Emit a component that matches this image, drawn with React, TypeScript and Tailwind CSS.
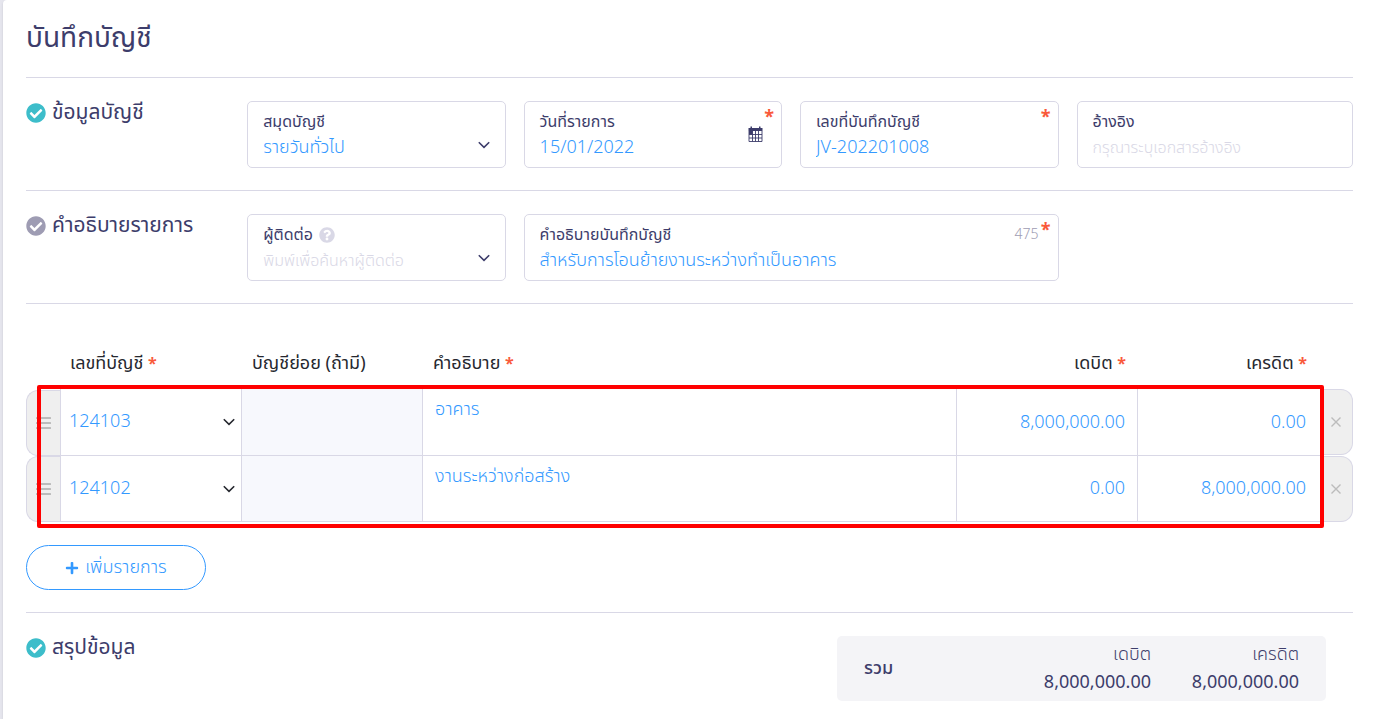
import type { ReactNode } from "react";
import { FaCheckCircle, FaPlus, FaQuestionCircle } from "react-icons/fa";

const rows = [
  { id: "row-1", account: "124103", desc: "อาคาร", debit: "8,000,000.00", credit: "0.00" },
  { id: "row-2", account: "124102", desc: "งานระหว่างก่อสร้าง", debit: "0.00", credit: "8,000,000.00" },
];

function Chevron({ className }: { className: string }) {
  return (
    <svg
      viewBox="0 0 12 8"
      fill="none"
      stroke="currentColor"
      strokeWidth="1.6"
      className={`pointer-events-none absolute h-2 w-3 ${className}`}
    >
      <path d="M0.8 1.2 L6 6.4 L11.2 1.2" />
    </svg>
  );
}

function CalendarIcon() {
  return (
    <svg viewBox="0 0 15 16" className="h-4 w-[15px]" fill="#3d3d6b">
      <path d="M2.5 0.5h1.5v2h-1.5z M11 0.5h1.5v2h-1.5z M0.5 2h14v3h-14z" />
      <path
        d="M1 5v10.5h13V5 M4.5 5v10.5 M7.5 5v10.5 M10.5 5v10.5 M1 8.5h13 M1 12h13"
        fill="none"
        stroke="#3d3d6b"
        strokeWidth="0.9"
      />
      <path d="M1 5h3.5v3.5h-3.5z" />
    </svg>
  );
}

function Star() {
  return <span className="text-base leading-4 font-bold text-[#f9593a]">*</span>;
}

function SectionTitle({ title, done }: { title: string; done: boolean }) {
  return (
    <h2 className="flex h-6 w-1/6 items-center gap-1.5 text-[21px] whitespace-nowrap">
      <FaCheckCircle className={done ? "size-5 shrink-0 text-[#3dbdca]" : "size-5 shrink-0 text-[#9e9cb3]"} />
      {title}
    </h2>
  );
}

function Section({ title, done, children }: { title: string; done: boolean; children: ReactNode }) {
  return (
    <section className="flex border-b border-[#d9d8e6] pt-[23px] pb-[22px]">
      <SectionTitle title={title} done={done} />
      <div className="grid w-5/6 grid-cols-4">{children}</div>
    </section>
  );
}

type FieldProps = {
  id: string;
  label: string;
  className?: string;
  required?: boolean;
  help?: boolean;
  children: ReactNode;
};

function Field({ id, label, className = "pr-[18px]", required, help, children }: FieldProps) {
  return (
    <div className={className}>
      <div className="relative h-[67px] rounded-[5px] border border-[#d9d8e6] px-[15px] pt-2">
        <label htmlFor={id} className="flex h-6 items-center gap-1.5 text-base">
          {label}
          {help && <FaQuestionCircle className="size-4 text-[#d9d8e6]" />}
        </label>
        {children}
        {required && (
          <span className="absolute top-1 right-[7px] text-lg leading-6 font-bold text-[#f9593a]">*</span>
        )}
      </div>
    </div>
  );
}

export default function App() {
  return (
    <div className="min-h-screen bg-[#e6e6ee] pl-[3px] font-['Noto_Sans_Thai','Noto_Sans',sans-serif] text-[#3d3d6b]">
      <main className="min-h-screen rounded-tl-[4px] bg-white pr-5 pl-[23px] shadow">
        <header className="flex h-[78px] items-center border-b border-[#d9d8e6]">
          <h1 className="text-[28px] leading-9">บันทึกบัญชี</h1>
        </header>

        <Section title="ข้อมูลบัญชี" done>
          <Field id="book" label="สมุดบัญชี">
            <select id="book" className="block h-7 w-full appearance-none text-lg font-light text-[#3399ff] outline-none">
              <option>รายวันทั่วไป</option>
            </select>
            <Chevron className="right-[15px] bottom-[18px]" />
          </Field>
          <Field id="date" label="วันที่รายการ" required>
            <input
              id="date"
              defaultValue="15/01/2022"
              className="block h-7 w-full text-lg font-light text-[#3399ff] outline-none"
            />
            <button type="button" aria-label="เลือกวันที่" className="absolute top-6 right-[18px]">
              <CalendarIcon />
            </button>
          </Field>
          <Field id="number" label="เลขที่บันทึกบัญชี" required>
            <input
              id="number"
              defaultValue="JV-202201008"
              className="block h-7 w-full text-lg font-light text-[#3399ff] outline-none"
            />
          </Field>
          <Field id="ref" label="อ้างอิง" className="">
            <input
              id="ref"
              placeholder="กรุณาระบุเอกสารอ้างอิง"
              className="block h-7 w-full text-base font-light outline-none placeholder:text-[#d9d8e6]"
            />
          </Field>
        </Section>

        <Section title="คำอธิบายรายการ" done={false}>
          <Field id="contact" label="ผู้ติดต่อ" help>
            <select id="contact" className="block h-7 w-full appearance-none text-base font-light text-[#d9d8e6] outline-none">
              <option>พิมพ์เพื่อค้นหาผู้ติดต่อ</option>
            </select>
            <Chevron className="right-[15px] bottom-[18px]" />
          </Field>
          <Field id="note" label="คำอธิบายบันทึกบัญชี" className="col-span-2 pr-[18px]" required>
            <input
              id="note"
              defaultValue="สำหรับการโอนย้ายงานระหว่างทำเป็นอาคาร"
              className="block h-7 w-full text-lg font-light text-[#3399ff] outline-none"
            />
            <span className="absolute top-2.5 right-[19px] text-sm font-light text-[#9e9cb3]">475</span>
          </Field>
        </Section>

        {/* Journal lines */}
        <section className="border-b border-[#d9d8e6] pb-[22px]">
          <div className="relative pt-[35px]">
            <table className="w-full table-fixed border-separate border-spacing-0">
              <colgroup>
                <col className="w-[34px]" />
                <col className="w-[182px]" />
                <col className="w-[181px]" />
                <col />
                <col className="w-[181px]" />
                <col className="w-[183px]" />
                <col className="w-[32px]" />
              </colgroup>
              <thead>
                <tr className="h-[50px] text-lg whitespace-nowrap text-[#26282f]">
                  <th aria-label="ลำดับ" />
                  <th className="pl-2.5 text-left font-normal">เลขที่บัญชี <Star /></th>
                  <th className="pl-2.5 text-left font-normal">บัญชีย่อย (ถ้ามี)</th>
                  <th className="pl-2.5 text-left font-normal">คำอธิบาย <Star /></th>
                  <th className="pr-3 text-right font-normal">เดบิต <Star /></th>
                  <th className="pr-3.5 text-right font-normal">เครดิต <Star /></th>
                  <th aria-label="ลบ" />
                </tr>
              </thead>
              <tbody>
                {rows.map((row) => (
                  <tr key={row.id} className="h-[66px] text-lg font-light text-[#3399ff] first:h-[67px]">
                    <td className="p-0 align-bottom">
                      <button
                        type="button"
                        aria-label="ย้ายรายการ"
                        className="flex h-[66px] w-full items-center justify-end rounded-l-[12px] border border-r-0 border-[#d9d8e6] bg-[#efefef] pr-[9px] text-[#bcbcbc]"
                      >
                        <svg viewBox="0 0 15 14" className="h-3.5 w-[15px]" fill="currentColor">
                          <rect y="1" width="15" height="2" rx="0.5" />
                          <rect y="6" width="15" height="2" rx="0.5" />
                          <rect y="11" width="15" height="2" rx="0.5" />
                        </svg>
                      </button>
                    </td>
                    <td className="border-x border-b border-[#d9d8e6] p-0">
                      <div className="relative">
                        <select
                          aria-label="เลขที่บัญชี"
                          defaultValue={row.account}
                          className="block h-16 w-full appearance-none pl-2 outline-none"
                        >
                          <option>{row.account}</option>
                        </select>
                        <Chevron className="top-7 right-1.5 text-[#26282f]" />
                      </div>
                    </td>
                    <td className="border-r border-b border-[#d9d8e6] bg-[#f7f8fd] p-0" />
                    <td className="border-r border-b border-[#d9d8e6] p-0">
                      <textarea
                        aria-label="คำอธิบาย"
                        defaultValue={row.desc}
                        className="block h-16 w-full resize-none px-3 pt-1.5 leading-7 outline-none"
                      />
                    </td>
                    <td className="border-r border-b border-[#d9d8e6] p-0">
                      <input
                        aria-label="เดบิต"
                        defaultValue={row.debit}
                        className="block h-16 w-full pr-3 text-right outline-none"
                      />
                    </td>
                    <td className="border-r border-b border-[#d9d8e6] p-0">
                      <input
                        aria-label="เครดิต"
                        defaultValue={row.credit}
                        className="block h-16 w-full pr-3.5 text-right outline-none"
                      />
                    </td>
                    <td className="p-0 align-top">
                      <button
                        type="button"
                        aria-label="ลบรายการ"
                        className="flex h-[66px] w-full items-center justify-center rounded-r-[12px] border border-l-0 border-[#d9d8e6] bg-[#efefef] pr-0.5 text-[#bcbcbc]"
                      >
                        <svg viewBox="0 0 10 10" className="size-2.5" stroke="currentColor" strokeWidth="1.4">
                          <path d="M0.5 0.5 L9.5 9.5 M9.5 0.5 L0.5 9.5" />
                        </svg>
                      </button>
                    </td>
                  </tr>
                ))}
              </tbody>
            </table>
            {/* highlight frame over the lines */}
            <div className="pointer-events-none absolute top-[81px] right-[29px] -bottom-1.5 left-[11px] rounded-[2px] border-4 border-[#ff0000]" />
          </div>
          <button
            type="button"
            className="mt-[23px] flex h-[45px] w-[180px] items-center justify-center gap-1.5 rounded-full border border-[#3399ff] text-lg font-light text-[#3399ff]"
          >
            <FaPlus className="size-3.5" />
            เพิ่มรายการ
          </button>
        </section>

        <section className="flex items-start justify-between pt-[23px] pr-[27px]">
          <SectionTitle title="สรุปข้อมูล" done />
          <div className="flex h-[65px] w-[489px] items-center rounded-[5px] bg-[#f4f4f7] px-[27px] text-lg">
            <span className="flex-1 font-medium">รวม</span>
            <div className="w-[148px] text-right">
              <div className="leading-7 font-light">เดบิต</div>
              <div className="leading-7">8,000,000.00</div>
            </div>
            <div className="w-[148px] text-right">
              <div className="leading-7 font-light">เครดิต</div>
              <div className="leading-7">8,000,000.00</div>
            </div>
          </div>
        </section>
      </main>
    </div>
  );
}
